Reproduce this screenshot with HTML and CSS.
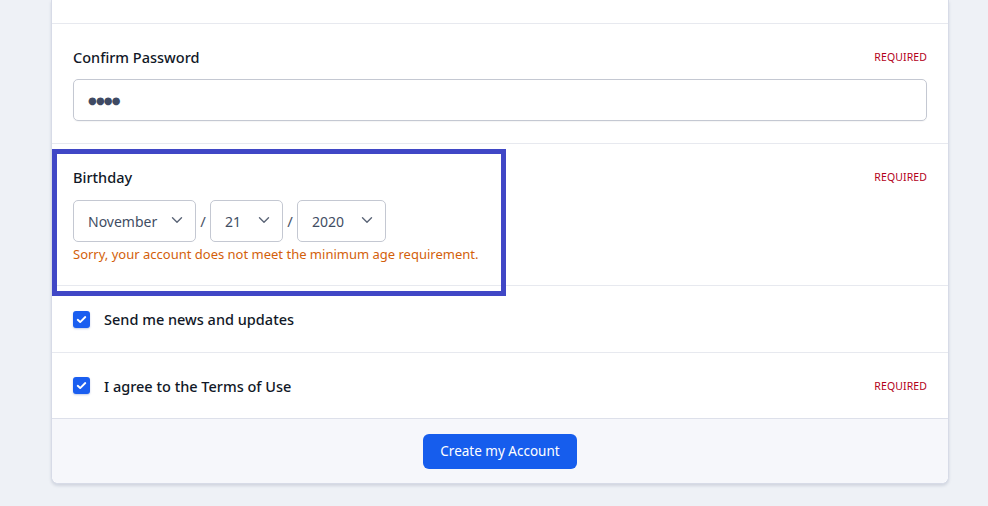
FILE: index.html
```html
<!DOCTYPE html>
<html lang="en">
<head>
<meta charset="utf-8">
<title>Create Account</title>
<link rel="stylesheet" href="styles.css">
</head>
<body>
<main class="page">
  <form class="card">
    <div class="card-top"></div>
    <section class="field">
      <div class="field-head">
        <label class="label">Confirm Password</label>
        <span class="req">Required</span>
      </div>
      <div class="input"><span class="dots">●●●●</span></div>
    </section>
    <section class="field birthday">
      <div class="field-head">
        <label class="label">Birthday</label>
        <span class="req">Required</span>
      </div>
      <div class="date-row">
        <div class="select sel-month">November<svg class="chev" viewBox="0 0 12 8"><path d="M1.5 1.8 6 6.2l4.5-4.4" fill="none" stroke="#5b6577" stroke-width="1.4" stroke-linecap="round" stroke-linejoin="round"/></svg></div>
        <span class="slash">/</span>
        <div class="select sel-day">21<svg class="chev" viewBox="0 0 12 8"><path d="M1.5 1.8 6 6.2l4.5-4.4" fill="none" stroke="#5b6577" stroke-width="1.4" stroke-linecap="round" stroke-linejoin="round"/></svg></div>
        <span class="slash">/</span>
        <div class="select sel-year">2020<svg class="chev" viewBox="0 0 12 8"><path d="M1.5 1.8 6 6.2l4.5-4.4" fill="none" stroke="#5b6577" stroke-width="1.4" stroke-linecap="round" stroke-linejoin="round"/></svg></div>
      </div>
      <p class="error">Sorry, your account does not meet the minimum age requirement.</p>
      <div class="highlight"></div>
    </section>
    <section class="check-row">
      <span class="checkbox"><svg viewBox="0 0 18 18"><path d="M5 9.3l2.6 2.4L13 6.4" fill="none" stroke="#fff" stroke-width="2" stroke-linecap="round" stroke-linejoin="round"/></svg></span>
      <span class="check-label">Send me news and updates</span>
    </section>
    <section class="check-row last">
      <span class="checkbox"><svg viewBox="0 0 18 18"><path d="M5 9.3l2.6 2.4L13 6.4" fill="none" stroke="#fff" stroke-width="2" stroke-linecap="round" stroke-linejoin="round"/></svg></span>
      <span class="check-label">I agree to the Terms of Use</span>
      <span class="req push">Required</span>
    </section>
    <footer class="card-foot">
      <button type="button" class="btn">Create my Account</button>
    </footer>
  </form>
</main>
</body>
</html>
```
FILE: styles.css
```css
* { box-sizing: border-box; }
html, body { margin: 0; height: 100%; }
body {
  background: #eef1f6;
  font-family: "Noto Sans", "Open Sans", "Liberation Sans", sans-serif;
  color: #111827;
  overflow: hidden;
}
.page {
  padding: 0 39px 0 51px;
}
.card {
  background: #fff;
  border: 1px solid #d7dbe7;
  border-top: none;
  border-radius: 0 0 7px 7px;
  box-shadow: 0 2px 3px rgba(80, 90, 120, 0.18);
}
.card-top {
  height: 24px;
  border-bottom: 1px solid #e7e9ef;
}
.field {
  position: relative;
  padding: 23px 21px 22px 21px;
  border-bottom: 1px solid #e7e9ef;
}
.field-head {
  display: flex;
  align-items: center;
  justify-content: space-between;
  height: 20px;
  margin-bottom: 12px;
}
.label {
  font-size: 14.5px;
  font-weight: 500;
  color: #111827;
}
.req {
  font-size: 10.5px;
  color: #b3001b;
  text-transform: uppercase;
  letter-spacing: 0.1px;
}
.input {
  height: 42px;
  border: 1px solid #c4c8d2;
  border-radius: 5px;
  padding: 0 14px;
  display: flex;
  align-items: center;
  box-shadow: 0 1px 1px rgba(0,0,0,0.04);
}
.dots {
  font-family: "DejaVu Sans", sans-serif;
  font-size: 10px;
  letter-spacing: -0.8px;
  color: #3f4a63;
}
.birthday .field-head {
  margin-bottom: 13px;
}
.date-row {
  display: flex;
  align-items: center;
}
.select {
  height: 42px;
  border: 1px solid #c4c8d2;
  border-radius: 5px;
  display: flex;
  align-items: center;
  justify-content: space-between;
  padding: 0 12px 0 14px;
  font-size: 14px;
  color: #3f4d63;
}
.sel-month { width: 123px; }
.sel-day { width: 73px; }
.sel-year { width: 89px; }
.chev { width: 12px; height: 8px; margin-top: -2px; }
.slash {
  width: 14px;
  text-align: center;
  font-size: 15px;
  color: #4a5568;
}
.error {
  margin: 3px 0 0;
  font-size: 13px;
  line-height: 18px;
  color: #d35f0b;
}
.highlight {
  position: absolute;
  left: 0;
  top: 5px;
  width: 454px;
  height: 147px;
  border: 5px solid #4047c6;
  pointer-events: none;
}
.check-row {
  display: flex;
  align-items: center;
  height: 67px;
  padding: 0 21px 0 21px;
  border-bottom: 1px solid #e7e9ef;
}
.check-row.last { height: 66px; border-bottom-color: #dde0ea; }
.checkbox {
  width: 17px;
  height: 17px;
  border-radius: 3px;
  background: #1a5ef0;
  display: flex;
  align-items: center;
  justify-content: center;
  box-shadow: 0 1px 2px rgba(20, 60, 160, 0.25);
  margin-right: 14px;
}
.checkbox svg { width: 17px; height: 17px; }
.check-label {
  font-size: 14.5px;
  font-weight: 500;
  color: #111827;
}
.push { margin-left: auto; }
.card-foot {
  background: #f6f7fb;
  height: 64px;
  display: flex;
  align-items: center;
  justify-content: center;
  border-radius: 0 0 7px 7px;
}
.btn {
  height: 35px;
  width: 154px;
  border: none;
  border-radius: 6px;
  background: #165ded;
  color: #fff;
  font-family: inherit;
  font-size: 13.5px;
  cursor: pointer;
}
```
